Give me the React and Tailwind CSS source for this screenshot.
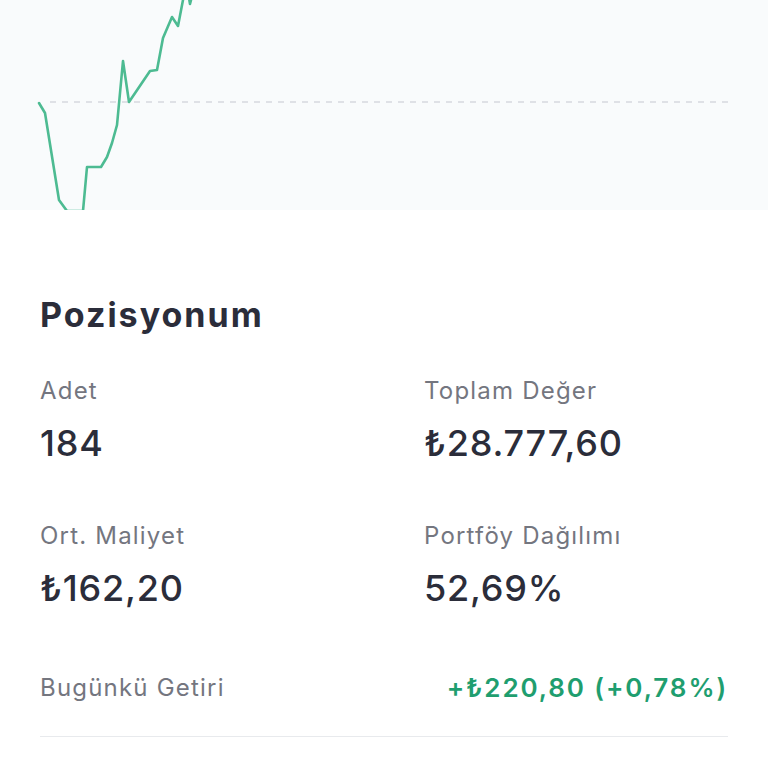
import React from "react";

const chartPoints = [
  [39, 103], [45, 113], [59, 200], [67, 211], [83, 211], [87, 167],
  [101, 167], [107, 157], [112, 143], [117, 125], [123, 61], [129, 102],
  [150, 71], [157, 70], [163, 38], [172, 17], [178, 26], [183, 0],
  [187, -14], [190, 4], [194, -12], [200, -30],
];

const stats = [
  { label: "Adet", value: "184" },
  { label: "Toplam Değer", value: "₺28.777,60" },
  { label: "Ort. Maliyet", value: "₺162,20" },
  { label: "Portföy Dağılımı", value: "52,69%" },
];

function PriceChart() {
  const d = chartPoints.map(([x, y], i) => `${i === 0 ? "M" : "L"}${x} ${y}`).join(" ");
  return (
    <div className="h-[210px] w-full overflow-hidden bg-[#f9fbfc]">
      <svg width="768" height="210" viewBox="0 0 768 210" className="block">
        <line x1="50" y1="102" x2="730" y2="102" stroke="#d6d9de" strokeWidth="1.5" strokeDasharray="6 6" />
        <path d={d} fill="none" stroke="#4dbb92" strokeWidth="2.6" strokeLinejoin="round" strokeLinecap="round" />
      </svg>
    </div>
  );
}

export default function App() {
  return (
    <div
      className="w-[768px] h-[768px] overflow-hidden bg-white"
      style={{ fontFamily: "Inter, 'Noto Sans', sans-serif" }}
    >
      <PriceChart />

      {/* POSITION SUMMARY */}
      <div className="px-[40px] pt-[85px]">
        <h2 className="text-[34px] leading-[40px] font-bold text-[#2b2d3a] tracking-[2px]">
          Pozisyonum
        </h2>

        <div className="mt-[41px] grid grid-cols-[384px_1fr] gap-y-[56px]">
          {stats.map((s) => (
            <div key={s.label}>
              <div className="text-[24px] leading-[30px] text-[#74767f] tracking-[1.2px]">{s.label}</div>
              <div className="mt-[15px] text-[36px] leading-[44px] font-medium text-[#2b2d3a] tracking-[0.8px]">
                {s.value}
              </div>
            </div>
          ))}
        </div>

        <div className="mt-[60px] flex items-center justify-between pb-[30px] border-b border-[#e8eaed]">
          <span className="text-[24px] leading-[36px] text-[#74767f] tracking-[1.2px]">Bugünkü Getiri</span>
          <span className="text-[26px] leading-[36px] font-semibold text-[#1f9e6f] tracking-[1.9px]">
            +₺220,80 (+0,78%)
          </span>
        </div>
      </div>
    </div>
  );
}
